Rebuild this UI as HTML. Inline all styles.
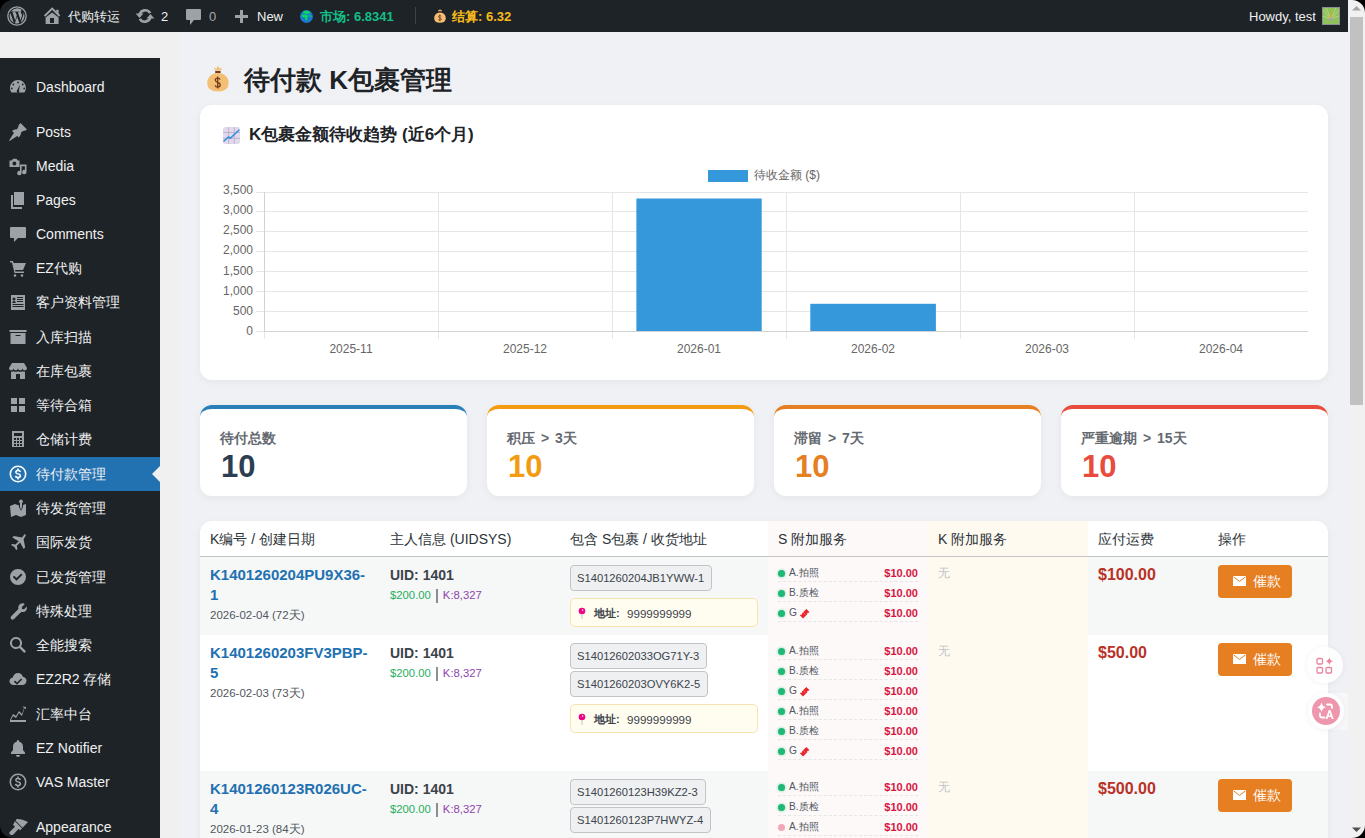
<!DOCTYPE html>
<html><head><meta charset="utf-8">
<style>
*{box-sizing:border-box;margin:0;padding:0}
html,body{width:1365px;height:838px;overflow:hidden}
body{background:#f0f0f1;font-family:"Liberation Sans",sans-serif;color:#3c434a;font-size:13px;position:relative}
.abs{position:absolute}
#adminbar{position:absolute;left:0;top:0;width:1348px;height:32px;background:#1d2327;color:#f0f0f1;font-size:13px;line-height:32px}
#adminbar .it{position:absolute;top:1px;height:32px;white-space:nowrap}
#sb{position:absolute;left:0;top:58px;width:160px;height:780px;background:#1d2327}
#sbtop{position:absolute;left:0;top:32px;width:180px;height:26px;background:#f0f0f0}
.mi{position:absolute;left:0;width:160px;height:34px;color:#f0f0f1;font-size:14px}
.mi .tx{position:absolute;left:36px;top:0;line-height:34px;white-space:nowrap}
.mi svg{position:absolute;left:8px;top:7px;width:20px;height:20px;fill:#9ca2a7}
.mi.act{background:#2271b1}
.mi.act svg{fill:#fff}
.mi.act:after{content:"";position:absolute;right:0;top:9px;border:8px solid transparent;border-right-color:#f0f0f1}
#scroll{position:absolute;left:1348px;top:0;width:17px;height:838px;background:#f1f1f1}
#thumb{position:absolute;left:2px;top:17px;width:13px;height:388px;background:#c1c1c1}
.corner{position:absolute;width:14px;height:14px;overflow:hidden}
.card{position:absolute;background:#fff;border-radius:12px;box-shadow:0 2px 8px rgba(0,0,0,0.05)}

#wrap{position:absolute;left:180px;top:32px;width:1168px;height:806px;background:#f0f1f5}
.h1{position:absolute;left:244px;top:61px;font-size:26px;font-weight:bold;color:#1d2327;line-height:38px;white-space:nowrap}
.ctitle{position:absolute;left:249px;top:124px;font-size:17px;font-weight:bold;color:#1d2327;line-height:22px;white-space:nowrap}
.stat{position:absolute;top:405px;width:267px;height:91px;background:#fff;border-radius:12px;border-top:4px solid;box-shadow:0 2px 8px rgba(0,0,0,0.05)}
.stat .lb{position:absolute;left:20px;top:19px;font-size:14px;word-spacing:2px;font-weight:bold;color:#646970;line-height:20px;white-space:nowrap}
.stat .vl{position:absolute;left:21px;top:40px;font-size:31px;font-weight:bold;line-height:36px}
#tbl{position:absolute;left:200px;top:521px;width:1128px;height:340px;background:#fff;border-radius:12px;overflow:hidden;box-shadow:0 2px 8px rgba(0,0,0,0.05)}
.th{position:absolute;top:1px;height:35px;line-height:35px;font-size:14px;color:#2c3338;white-space:nowrap;padding-left:10px}
.colS{position:absolute;left:568px;top:0;width:160px;height:340px;background:#fdf9f9}
.colK{position:absolute;left:728px;top:0;width:160px;height:340px;background:#fefaf0}
.row{position:absolute;left:0;width:1128px}
.klink{position:absolute;left:10px;top:8px;width:170px;font-size:15px;font-weight:bold;color:#2271b1;line-height:20px}
.kdate{position:absolute;left:10px;font-size:11.5px;color:#50575e;line-height:16px;white-space:nowrap}
.uid{position:absolute;left:190px;top:8px;font-size:14px;font-weight:bold;color:#3c434a;line-height:20px;white-space:nowrap}
.bal{position:absolute;left:190px;top:30px;font-size:11.3px;line-height:16px;white-space:nowrap}
.tag{position:absolute;left:370px;height:26px;line-height:24px;border:1px solid #c3c4c7;background:#eef0f2;border-radius:4px;padding:0 7px 0 6px;font-size:11.2px;color:#3c434a;white-space:nowrap}
.addr{position:absolute;left:370px;width:188px;height:29px;border:1px solid #f7e3b0;background:#fffcf0;border-radius:5px;font-size:12px;line-height:29px;white-space:nowrap;color:#3c434a}
.svc{position:absolute;left:578px;width:140px;height:20px;border-bottom:1px dashed #e6e6e6}
.svc .dot{position:absolute;left:0;top:8px;width:7px;height:7px;border-radius:50%;background:#1fb877;box-shadow:0 0 3px rgba(31,184,119,0.6)}
.svc .nm{position:absolute;left:11px;top:3px;font-size:10.2px;line-height:16px;color:#50575e;white-space:nowrap}
.svc .pr{position:absolute;right:0;top:3px;font-size:11px;font-weight:bold;line-height:16px;color:#d6153f}
.none{position:absolute;left:738px;top:8px;font-size:12px;color:#c3c4c7;line-height:18px}
.fee{position:absolute;left:898px;top:8px;font-size:16px;font-weight:bold;color:#b83227;line-height:20px}
.btn{position:absolute;left:1018px;top:8px;width:74px;height:33px;background:#e67e22;border-radius:4px;color:#fff;font-size:14px;line-height:33px;white-space:nowrap}
</style></head><body>
<div id="adminbar">
<svg class="abs" style="left:7px;top:6px" width="20" height="20" viewBox="0 0 20 20"><circle cx="10" cy="10" r="9.2" fill="none" stroke="#9ca2a7" stroke-width="1.3"/><path fill="#9ca2a7" d="M2.6 10c0 2.9 1.7 5.5 4.2 6.7L3.3 7A7.4 7.4 0 0 0 2.6 10zm12.4-.4c0-.9-.3-1.6-.6-2.1-.4-.6-.7-1.2-.7-1.8 0-.7.5-1.4 1.3-1.4h.1A7.4 7.4 0 0 0 3.9 5.7h.5c.8 0 2-.1 2-.1.4 0 .4.6 0 .6 0 0-.4.1-.9.1l2.7 8.1 1.6-4.9-1.2-3.2c-.4 0-.8-.1-.8-.1-.4 0-.4-.6 0-.6 0 0 1.2.1 2 .1.8 0 2-.1 2-.1.4 0 .4.6 0 .6 0 0-.4.1-.9.1l2.7 8 .7-2.5c.4-1 .6-1.7.6-2.3zM10.1 10.7l-2.2 6.5a7.4 7.4 0 0 0 4.6-.1l-.1-.1-2.3-6.3zm6.4-4.2c0 .3.1.5.1.8 0 .7-.1 1.6-.6 2.7l-2.2 6.5a7.4 7.4 0 0 0 2.7-10z"/></svg>
<svg class="abs" style="left:40px;top:4px" width="24" height="24" viewBox="0 0 24 24"><path d="M4.6 12L12.2 4.6 19.6 12" stroke="#9ca2a7" stroke-width="2" fill="none"/><rect x="16.2" y="5.8" width="2.4" height="4" fill="#9ca2a7"/><path fill-rule="evenodd" fill="#9ca2a7" d="M5.6 13.4L12.2 8.6 18.6 13.4V19.9H5.6zM10 14v4.9h4V14z"/></svg>
<div class="it" style="left:68px">代购转运</div>
<svg class="abs" style="left:135px;top:8px" width="20" height="16" viewBox="0 0 20 16"><path d="M15.2 5.2A5.8 5.8 0 0 0 4.6 6.6M4.8 10.8A5.8 5.8 0 0 0 15.4 9.4" stroke="#9ca2a7" stroke-width="2.6" fill="none"/><path d="M0.6 5.6H8.4L4.6 10z" fill="#9ca2a7"/><path d="M19.4 10.4H11.6L15.4 6z" fill="#9ca2a7"/></svg>
<div class="it" style="left:161px">2</div>
<svg class="abs" style="left:186px;top:9px" width="15" height="16" viewBox="0 0 15 16"><path fill="#9ca2a7" d="M1 0h13a1 1 0 0 1 1 1v9a1 1 0 0 1-1 1H8l-4 5v-5H1a1 1 0 0 1-1-1V1a1 1 0 0 1 1-1z"/></svg>
<div class="it" style="left:209px;color:#a7aaad">0</div>
<svg class="abs" style="left:235px;top:10px" width="13" height="13" viewBox="0 0 13 13"><path fill="#9ca2a7" d="M5 0h3v5h5v3H8v5H5V8H0V5h5z"/></svg>
<div class="it" style="left:257px">New</div>
<svg class="abs" style="left:300px;top:9.7px" width="13" height="13" viewBox="0 0 26 26"><circle cx="13" cy="13" r="13" fill="#1a78d0"/><path fill="#0bd65e" d="M8 2.2Q13 0.8 18 2.5L21 5.5Q19 8 16 7.2L13 8.5Q11 6.5 7 6.5Q5.5 5 6 4z"/><path fill="#0bd65e" d="M3.5 9.5Q8 8 12 9.5L16 10.5Q17.5 13.5 15 15.5L13.5 21.5Q12 22.5 11 19L9.5 15Q5.5 14.5 3 12.5z"/><path fill="#0bd65e" d="M18.5 9.5Q22 10 23.5 13L21 14.5Q19.5 12 18.5 11z"/></svg>
<div class="it" style="left:320px;color:#12bf86;font-weight:bold">市场: 6.8341</div>
<div class="abs" style="left:415px;top:7px;width:1px;height:17px;background:#3c434a"></div>
<svg class="abs" style="left:434px;top:9px" width="12" height="14.5" viewBox="0 0 22 27"><path fill="#f3bf74" d="M7 1.6Q8.5 2.8 9.3 2.6L11 0l1.7 2.6Q13.5 2.8 15 1.6L14.2 4.3H7.8z"/><rect x="8.2" y="4.9" width="5.4" height="2.3" fill="#7a3a1c"/><path fill="#f3bf74" d="M8 7.2h6Q21.7 9.8 21.7 17Q21.7 25.6 11 25.6Q0.2 25.6 0.2 17Q0.2 9.8 8 7.2z"/><path d="M13 13.6Q12.6 12.1 10.7 12.1Q8.3 12.1 8.3 14.1Q8.3 15.8 10.7 16.4Q13.2 17 13.2 19Q13.2 21 10.7 21Q8.5 21 8.1 19.3M10.7 10.6V22.5" stroke="#7a3a1c" stroke-width="1.6" fill="none"/></svg>
<div class="it" style="left:452px;color:#f9bc1c;font-weight:bold">结算: 6.32</div>
<div class="it" style="left:1249px">Howdy, test</div>
<svg class="abs" style="left:1322px;top:7px" width="18" height="18" viewBox="0 0 18 18"><rect x=".5" y=".5" width="17" height="17" fill="#8fc25a" stroke="#8c8f94"/><path d="M9 12L1 3M9 12L4 1M9 12L14 1M9 12L17 3M9 12L1 9M9 12L17 9" stroke="#b9dc8a" stroke-width="1" opacity=".8"/><path d="M8.6 2.5h.8v6h-.8z" fill="#d9a53a"/><path d="M7.6 8.3h2.8l.3 2.2H7.3z" fill="#e0a93a"/><path d="M7.3 10.5h3.4v3.2Q9 15 7.3 13.7z" fill="#a5a59a"/></svg>
</div>
<div id="sbtop"></div>
<div id="sb"></div>
<div class="mi" style="top:70.00px"><svg viewBox="0 0 20 20"><path d="M10 3a8 8 0 0 0-8 8c0 1.9.6 3.4 1.5 4.5h13A8 8 0 0 0 10 3zm0 1.6a.9.9 0 1 1 0 1.8.9.9 0 0 1 0-1.8zM5.3 6.6a.9.9 0 1 1 0 1.8.9.9 0 0 1 0-1.8zm9.4 0a.9.9 0 1 1 0 1.8.9.9 0 0 1 0-1.8zM3.8 10.5a.9.9 0 1 1 0 1.8.9.9 0 0 1 0-1.8zm12.4 0a.9.9 0 1 1 0 1.8.9.9 0 0 1 0-1.8zM12 7.5l-1 6a1.3 1.3 0 1 1-2 0z" fill-rule="evenodd"/></svg><span class="tx">Dashboard</span></div>
<div class="mi" style="top:115.00px"><svg viewBox="0 0 20 20"><path d="M12.5 1L19 7.4L17.3 8.6Q15 8.8 13 10.6L12.8 12.6L10.8 15.6L9.2 14L1.6 18.9L1.1 18.4L6 10.8L3.9 9L6.6 7.4L9 7.2Q10.6 5.6 10.6 3.2Z"/></svg><span class="tx">Posts</span></div>
<div class="mi" style="top:149.00px"><svg viewBox="0 0 20 20"><path fill-rule="evenodd" d="M1.5 4.5h2.3l1.2-1.8h3.5l1.2 1.8h1.8v6.5H1.5zM6.4 5.6a2 2 0 1 0 0 4 2 2 0 0 0 0-4z"/><path d="M12 8.5h6.5v7.6a2.2 2.2 0 1 1-1.6-2.1V10.3h-3.3v6.8a2.2 2.2 0 1 1-1.6-2.1z"/></svg><span class="tx">Media</span></div>
<div class="mi" style="top:183.00px"><svg viewBox="0 0 20 20"><path d="M6 2h10v13H6zM3 5h2v12h9v2H3z"/></svg><span class="tx">Pages</span></div>
<div class="mi" style="top:217.00px"><svg viewBox="0 0 20 20"><path d="M3 3h14a1 1 0 0 1 1 1v9a1 1 0 0 1-1 1h-7l-4 4v-4H3a1 1 0 0 1-1-1V4a1 1 0 0 1 1-1z"/></svg><span class="tx">Comments</span></div>
<div class="mi" style="top:251.00px"><svg viewBox="0 0 20 20"><path d="M2 3h3l.6 2H18l-3 7H7l.5 1.5H16V15H6.5L4 4.5H2zM7 16.2a1.3 1.3 0 1 1 0 2.6 1.3 1.3 0 0 1 0-2.6zm7 0a1.3 1.3 0 1 1 0 2.6 1.3 1.3 0 0 1 0-2.6z"/></svg><span class="tx">EZ代购</span></div>
<div class="mi" style="top:285.28px"><svg viewBox="0 0 20 20"><path d="M3 3h14v15H3zm3 2.5a1.5 1.5 0 1 0 0 3 1.5 1.5 0 0 0 0-3zM4.3 11h3.5c0-1.3-.8-2-1.8-2s-1.7.7-1.7 2zM9 5v1h6V5zm0 2v1h6V7zm0 2v1h6V9zM4.5 12v1h11v-1zm0 2v1h11v-1z" fill-rule="evenodd"/></svg><span class="tx">客户资料管理</span></div>
<div class="mi" style="top:319.56px"><svg viewBox="0 0 20 20"><path d="M1.5 3h17v2h-17zM2.5 6h15v11h-15zm5 2v1h5V8z" fill-rule="evenodd"/></svg><span class="tx">入库扫描</span></div>
<div class="mi" style="top:353.84px"><svg viewBox="0 0 20 20"><path d="M4 2h12l3 5c0 1.4-1 2.3-2.3 2.3S14.4 8.4 14.4 7c0 1.4-1 2.3-2.2 2.3S10 8.4 10 7c0 1.4-1 2.3-2.2 2.3S5.6 8.4 5.6 7c0 1.4-1 2.3-2.3 2.3S1 8.4 1 7zm-1 8.5c.9.3 1.9.2 2.6-.3.6.4 1.4.6 2.2.6s1.6-.2 2.2-.6c.6.4 1.4.6 2.2.6s1.6-.2 2.2-.6c.7.5 1.7.6 2.6.3V18h-5v-5h-4v5H3z"/></svg><span class="tx">在库包裹</span></div>
<div class="mi" style="top:388.12px"><svg viewBox="0 0 20 20"><path d="M3 3h6v6H3zm8 0h6v6h-6zM3 11h6v6H3zm8 0h6v6h-6z"/></svg><span class="tx">等待合箱</span></div>
<div class="mi" style="top:422.40px"><svg viewBox="0 0 20 20"><path d="M4 2h12v16H4zm2 2v3h8V4zm0 5v2h2V9zm3 0v2h2V9zm3 0v2h2V9zm-6 3v2h2v-2zm3 0v2h2v-2zm3 0v2h2v-2zm-6 3v2h2v-2zm3 0v2h2v-2zm3 0v2h2v-2z" fill-rule="evenodd"/></svg><span class="tx">仓储计费</span></div>
<div class="mi act" style="top:456.68px"><svg viewBox="0 0 20 20"><path d="M10 1.5a8.5 8.5 0 1 1 0 17 8.5 8.5 0 0 1 0-17zm0 1.6a6.9 6.9 0 1 0 0 13.8 6.9 6.9 0 0 0 0-13.8zM9.2 4.5h1.6v1.3c1 .2 1.9.8 2.2 1.9l-1.5.6c-.2-.7-.8-1-1.5-1-.8 0-1.3.4-1.3.9 0 .6.6.8 1.6 1.1 1.4.4 2.9 1 2.9 2.7 0 1.2-.9 2.1-2.4 2.3v1.2H9.2v-1.2c-1.2-.2-2.1-.9-2.4-2.1l1.5-.6c.2.8.9 1.2 1.8 1.2.9 0 1.4-.4 1.4-1 0-.6-.6-.9-1.7-1.2-1.3-.4-2.7-.9-2.7-2.6 0-1.1.8-1.9 2.1-2.2z" fill-rule="evenodd"/></svg><span class="tx">待付款管理</span></div>
<div class="mi" style="top:490.96px"><svg viewBox="0 0 20 20"><path d="M13 1.5a2 2 0 0 1 1 3.7V9l-1 3-1-3V5.2a2 2 0 0 1 1-3.7zM2 8l5-2 4 1.5V9l2 4 2-4V7l3-1v11l-5 2-5-2-5 2z"/></svg><span class="tx">待发货管理</span></div>
<div class="mi" style="top:525.24px"><svg viewBox="0 0 20 20"><path d="M16.5 2.2c.8-.3 1.6.5 1.3 1.3l-2.2 3.8 1.6 8.2-1.5 1.5-3.6-6.4-3.2 3.2.5 3.3-1.2 1.2-1.8-3.4-3.4-1.8 1.2-1.2 3.3.5 3.2-3.2L4.3 5.4 5.8 3.9 14 5.5z"/></svg><span class="tx">国际发货</span></div>
<div class="mi" style="top:559.52px"><svg viewBox="0 0 20 20"><path d="M10 2a8 8 0 1 1 0 16 8 8 0 0 1 0-16zm-1.5 11.8l6-6-1.4-1.4-4.6 4.6-2.3-2.3-1.4 1.4z" fill-rule="evenodd"/></svg><span class="tx">已发货管理</span></div>
<div class="mi" style="top:593.80px"><svg viewBox="0 0 20 20"><path d="M16.7 3.3l-2.8 2.8.1 2 2 .1 2.8-2.8c.5 2.2-.3 4.4-2.4 5.3-1 .5-2.2.5-3.2.2L6 18.1c-.8.8-2 .8-2.8 0s-.8-2 0-2.8l7.2-7.2c-.3-1-.3-2.2.2-3.2.9-2.1 3.1-2.9 5.3-2.4z"/></svg><span class="tx">特殊处理</span></div>
<div class="mi" style="top:628.08px"><svg viewBox="0 0 20 20"><path d="M8 2a6 6 0 0 1 5 9.3l5 5-1.7 1.7-5-5A6 6 0 1 1 8 2zm0 2a4 4 0 1 0 0 8 4 4 0 0 0 0-8z" fill-rule="evenodd"/></svg><span class="tx">全能搜索</span></div>
<div class="mi" style="top:662.36px"><svg viewBox="0 0 20 20"><path d="M10 4c2.4 0 4.3 1.6 4.8 3.8 2 .2 3.7 1.8 3.7 3.9 0 2.2-1.8 4.3-4 4.3h-9C3.2 16 1.5 14.3 1.5 12.3c0-1.9 1.4-3.4 3.2-3.7C5.3 6 7.4 4 10 4zm3 5.5l-4 4-2-2-1.2 1.2L9 15.8l5.2-5.2z" fill-rule="evenodd"/></svg><span class="tx">EZ2R2 存储</span></div>
<div class="mi" style="top:696.64px"><svg viewBox="0 0 20 20"><path d="M18 3v2.5L16.5 4 14 12l-3-3-3 5-3-2-2 4h15v2H2V16l3-6 3 2 3-5 3 3 2-6-1.5-1.5z"/></svg><span class="tx">汇率中台</span></div>
<div class="mi" style="top:730.92px"><svg viewBox="0 0 20 20"><path d="M10 2c.6 0 1 .4 1 1v.6c2.4.5 4 2.5 4 5v3.4l2 2.5V16H3v-1.5l2-2.5V8.6c0-2.5 1.6-4.5 4-5V3c0-.6.4-1 1-1zM8 17h4a2 2 0 0 1-4 0z"/></svg><span class="tx">EZ Notifier</span></div>
<div class="mi" style="top:764.92px"><svg viewBox="0 0 20 20"><path d="M10 1.5a8.5 8.5 0 1 1 0 17 8.5 8.5 0 0 1 0-17zm0 1.6a6.9 6.9 0 1 0 0 13.8 6.9 6.9 0 0 0 0-13.8zM9.2 4.5h1.6v1.3c1 .2 1.9.8 2.2 1.9l-1.5.6c-.2-.7-.8-1-1.5-1-.8 0-1.3.4-1.3.9 0 .6.6.8 1.6 1.1 1.4.4 2.9 1 2.9 2.7 0 1.2-.9 2.1-2.4 2.3v1.2H9.2v-1.2c-1.2-.2-2.1-.9-2.4-2.1l1.5-.6c.2.8.9 1.2 1.8 1.2.9 0 1.4-.4 1.4-1 0-.6-.6-.9-1.7-1.2-1.3-.4-2.7-.9-2.7-2.6 0-1.1.8-1.9 2.1-2.2z" fill-rule="evenodd"/></svg><span class="tx">VAS Master</span></div>
<div class="mi" style="top:809.92px"><svg viewBox="0 0 20 20"><path d="M8.3 2.2C11.5 1.8 15.5 3 20 5l-5.4 5.8-6.9-7z"/><path d="M7 4.2l7 7.1-1.6 1.9-2-1.2-5 5.4c-1 1-2.8.9-3.6-.1-.7-.9-.5-2.1.3-2.9l4.9-4.6-2-2z"/></svg><span class="tx">Appearance</span></div>

<div id="wrap"></div>
<svg class="abs" style="left:207px;top:66px" width="22" height="27" viewBox="0 0 22 27"><path fill="#f3bf74" d="M7 1.6Q8.5 2.8 9.3 2.6L11 0l1.7 2.6Q13.5 2.8 15 1.6L14.2 4.3H7.8z"/><rect x="8.2" y="4.9" width="5.4" height="2.3" fill="#7a3a1c"/><path fill="#f3bf74" d="M8 7.2h6Q21.7 9.8 21.7 17Q21.7 25.6 11 25.6Q0.2 25.6 0.2 17Q0.2 9.8 8 7.2z"/><path d="M13 13.6Q12.6 12.1 10.7 12.1Q8.3 12.1 8.3 14.1Q8.3 15.8 10.7 16.4Q13.2 17 13.2 19Q13.2 21 10.7 21Q8.5 21 8.1 19.3M10.7 10.6V22.5" stroke="#7a3a1c" stroke-width="1.3" fill="none"/></svg>
<div class="h1">待付款 K包裹管理</div>
<div class="card" style="left:200px;top:105px;width:1128px;height:275px"></div>
<svg class="abs" style="left:223px;top:127px" width="17" height="17" viewBox="0 0 17 17"><rect x="0" y="0" width="17" height="17" rx="2.5" fill="#e1d9ec"/><path d="M0 5.5h17M0 11.3h17M5.6 0v17M11.3 0v17" stroke="#b8a9c9" stroke-width=".8"/><path d="M0.5 14.5l5-4.5 1.8 1.2 9-8.5" stroke="#2f8fe0" stroke-width="1.5" fill="none"/></svg>
<div class="ctitle">K包裹金额待收趋势 (近6个月)</div>
<svg class="abs" style="left:0;top:0" width="1365" height="400" viewBox="0 0 1365 400" font-family="Liberation Sans" font-size="12" fill="#666">
<path d="M256 192.5H1308" stroke="#e6e6e6" stroke-width="1"/>
<text x="253" y="194.0" text-anchor="end">3,500</text>
<path d="M256 211.5H1308" stroke="#e6e6e6" stroke-width="1"/>
<text x="253" y="214.1" text-anchor="end">3,000</text>
<path d="M256 231.5H1308" stroke="#e6e6e6" stroke-width="1"/>
<text x="253" y="234.3" text-anchor="end">2,500</text>
<path d="M256 251.5H1308" stroke="#e6e6e6" stroke-width="1"/>
<text x="253" y="254.4" text-anchor="end">2,000</text>
<path d="M256 271.5H1308" stroke="#e6e6e6" stroke-width="1"/>
<text x="253" y="274.6" text-anchor="end">1,500</text>
<path d="M256 291.5H1308" stroke="#e6e6e6" stroke-width="1"/>
<text x="253" y="294.7" text-anchor="end">1,000</text>
<path d="M256 311.5H1308" stroke="#e6e6e6" stroke-width="1"/>
<text x="253" y="314.8" text-anchor="end">500</text>
<path d="M256 331.5H1308" stroke="#e6e6e6" stroke-width="1"/>
<text x="253" y="335.0" text-anchor="end">0</text>
<path d="M264.5 192V339" stroke="#e6e6e6" stroke-width="1"/>
<path d="M438.5 192V339" stroke="#e6e6e6" stroke-width="1"/>
<path d="M612.5 192V339" stroke="#e6e6e6" stroke-width="1"/>
<path d="M786.5 192V339" stroke="#e6e6e6" stroke-width="1"/>
<path d="M960.5 192V339" stroke="#e6e6e6" stroke-width="1"/>
<path d="M1134.5 192V339" stroke="#e6e6e6" stroke-width="1"/>
<path d="M264.5 192V331.5H1308" stroke="#d2d2d2" stroke-width="1" fill="none"/>
<text x="351" y="353" text-anchor="middle">2025-11</text>
<text x="525" y="353" text-anchor="middle">2025-12</text>
<text x="699" y="353" text-anchor="middle">2026-01</text>
<text x="873" y="353" text-anchor="middle">2026-02</text>
<text x="1047" y="353" text-anchor="middle">2026-03</text>
<text x="1221" y="353" text-anchor="middle">2026-04</text>
<rect x="636.4" y="198.5" width="125.3" height="132.5" fill="#3498db"/>
<rect x="810.3" y="303.8" width="125.6" height="27.2" fill="#3498db"/>
<rect x="708" y="170" width="40" height="12" fill="#3498db"/>
<text x="754" y="179">待收金额 ($)</text>
</svg>
<div class="stat" style="left:200px;border-top-color:#2980b9"><div class="lb">待付总数</div><div class="vl" style="color:#2c3e50">10</div></div>
<div class="stat" style="left:487px;border-top-color:#f39c12"><div class="lb">积压 &gt; 3天</div><div class="vl" style="color:#f39c12">10</div></div>
<div class="stat" style="left:774px;border-top-color:#e67e22"><div class="lb">滞留 &gt; 7天</div><div class="vl" style="color:#e67e22">10</div></div>
<div class="stat" style="left:1061px;border-top-color:#e74c3c"><div class="lb">严重逾期 &gt; 15天</div><div class="vl" style="color:#e74c3c">10</div></div>
<div id="tbl">
<div class="colS"></div><div class="colK"></div>
<div class="th" style="left:0px">K编号 / 创建日期</div>
<div class="th" style="left:180px">主人信息 (UIDSYS)</div>
<div class="th" style="left:360px">包含 S包裹 / 收货地址</div>
<div class="th" style="left:568px">S 附加服务</div>
<div class="th" style="left:728px">K 附加服务</div>
<div class="th" style="left:888px">应付运费</div>
<div class="th" style="left:1008px">操作</div>
<div class="abs" style="left:0;top:35px;width:1128px;height:1px;background:#c3c4c7"></div>
<div class="row" style="top:36px;height:78px;background:#f6f7f7"></div>
<div class="row" style="top:114px;height:136px;background:#fff"></div>
<div class="row" style="top:250px;height:90px;background:#f6f7f7"></div>
<div class="colS" style="top:36px;height:305px"></div><div class="colK" style="top:36px;height:305px"></div>
<div class="klink" style="top:44px">K1401260204PU9X36-<br>1</div>
<div class="kdate" style="top:86px">2026-02-04 (72天)</div>
<div class="uid" style="top:44px">UID: 1401</div>
<div class="bal" style="top:66px"><span style="color:#27ae60">$200.00</span><span style="display:inline-block;width:2px;height:14px;background:#50575e;vertical-align:-4px;margin:0 5px 0 5px;transform:scaleX(.65)"></span><span style="color:#8e44ad">K:8,327</span></div>
<div class="tag" style="top:44px">S1401260204JB1YWW-1</div>
<div class="addr" style="top:77px"><svg width="8" height="14" viewBox="0 0 8 14" style="position:absolute;left:7.3px;top:7.5px"><circle cx="4" cy="4" r="3.3" fill="#f0047f"/><circle cx="4.6" cy="3" r=".8" fill="#fff"/><path d="M4 7.2v4.8" stroke="#bbb" stroke-width=".8"/></svg><span style="position:absolute;left:23px;font-weight:bold;font-size:11px">地址:</span><span style="position:absolute;left:56px;font-size:11.6px">9999999999</span></div>
<div class="svc" style="top:41px"><span class="dot"></span><span class="nm">A.拍照</span><span class="pr">$10.00</span></div>
<div class="svc" style="top:61px"><span class="dot"></span><span class="nm">B.质检</span><span class="pr">$10.00</span></div>
<div class="svc" style="top:81px"><span class="dot"></span><span class="nm">G<svg width="11" height="11" viewBox="0 0 12 12" style="position:absolute;left:10px;top:2.5px"><path fill="#e8262b" d="M8 1l3.4 3.4-.9.9a1 1 0 0 0-1.4 1.4L4.4 11.4 1 8l.9-.9a1 1 0 0 0 1.4-1.4z"/><path d="M4.6 4.8l2.8 2.8" stroke="#fff" stroke-width=".7" stroke-dasharray="1 .9"/></svg></span><span class="pr">$10.00</span></div>
<div class="none" style="top:43px">无</div>
<div class="fee" style="top:44px">$100.00</div>
<div class="btn" style="top:44px"><svg width="13" height="10" viewBox="0 0 13 10" style="position:absolute;left:15px;top:11px"><rect x=".5" y=".5" width="12" height="9" fill="#fff" stroke="#fff"/><path d="M.5 .8l6 4.6 6-4.6" stroke="#e67e22" fill="none" stroke-width="1"/></svg><span style="position:absolute;left:35px">催款</span></div>
<div class="klink" style="top:122px">K1401260203FV3PBP-<br>5</div>
<div class="kdate" style="top:164px">2026-02-03 (73天)</div>
<div class="uid" style="top:122px">UID: 1401</div>
<div class="bal" style="top:144px"><span style="color:#27ae60">$200.00</span><span style="display:inline-block;width:2px;height:14px;background:#50575e;vertical-align:-4px;margin:0 5px 0 5px;transform:scaleX(.65)"></span><span style="color:#8e44ad">K:8,327</span></div>
<div class="tag" style="top:122px">S14012602033OG71Y-3</div>
<div class="tag" style="top:150px">S1401260203OVY6K2-5</div>
<div class="addr" style="top:183px"><svg width="8" height="14" viewBox="0 0 8 14" style="position:absolute;left:7.3px;top:7.5px"><circle cx="4" cy="4" r="3.3" fill="#f0047f"/><circle cx="4.6" cy="3" r=".8" fill="#fff"/><path d="M4 7.2v4.8" stroke="#bbb" stroke-width=".8"/></svg><span style="position:absolute;left:23px;font-weight:bold;font-size:11px">地址:</span><span style="position:absolute;left:56px;font-size:11.6px">9999999999</span></div>
<div class="svc" style="top:119px"><span class="dot"></span><span class="nm">A.拍照</span><span class="pr">$10.00</span></div>
<div class="svc" style="top:139px"><span class="dot"></span><span class="nm">B.质检</span><span class="pr">$10.00</span></div>
<div class="svc" style="top:159px"><span class="dot"></span><span class="nm">G<svg width="11" height="11" viewBox="0 0 12 12" style="position:absolute;left:10px;top:2.5px"><path fill="#e8262b" d="M8 1l3.4 3.4-.9.9a1 1 0 0 0-1.4 1.4L4.4 11.4 1 8l.9-.9a1 1 0 0 0 1.4-1.4z"/><path d="M4.6 4.8l2.8 2.8" stroke="#fff" stroke-width=".7" stroke-dasharray="1 .9"/></svg></span><span class="pr">$10.00</span></div>
<div class="svc" style="top:179px"><span class="dot"></span><span class="nm">A.拍照</span><span class="pr">$10.00</span></div>
<div class="svc" style="top:199px"><span class="dot"></span><span class="nm">B.质检</span><span class="pr">$10.00</span></div>
<div class="svc" style="top:219px"><span class="dot"></span><span class="nm">G<svg width="11" height="11" viewBox="0 0 12 12" style="position:absolute;left:10px;top:2.5px"><path fill="#e8262b" d="M8 1l3.4 3.4-.9.9a1 1 0 0 0-1.4 1.4L4.4 11.4 1 8l.9-.9a1 1 0 0 0 1.4-1.4z"/><path d="M4.6 4.8l2.8 2.8" stroke="#fff" stroke-width=".7" stroke-dasharray="1 .9"/></svg></span><span class="pr">$10.00</span></div>
<div class="none" style="top:121px">无</div>
<div class="fee" style="top:122px">$50.00</div>
<div class="btn" style="top:122px"><svg width="13" height="10" viewBox="0 0 13 10" style="position:absolute;left:15px;top:11px"><rect x=".5" y=".5" width="12" height="9" fill="#fff" stroke="#fff"/><path d="M.5 .8l6 4.6 6-4.6" stroke="#e67e22" fill="none" stroke-width="1"/></svg><span style="position:absolute;left:35px">催款</span></div>
<div class="klink" style="top:258px">K1401260123R026UC-<br>4</div>
<div class="kdate" style="top:300px">2026-01-23 (84天)</div>
<div class="uid" style="top:258px">UID: 1401</div>
<div class="bal" style="top:280px"><span style="color:#27ae60">$200.00</span><span style="display:inline-block;width:2px;height:14px;background:#50575e;vertical-align:-4px;margin:0 5px 0 5px;transform:scaleX(.65)"></span><span style="color:#8e44ad">K:8,327</span></div>
<div class="tag" style="top:258px">S1401260123H39KZ2-3</div>
<div class="tag" style="top:286px">S1401260123P7HWYZ-4</div>
<div class="svc" style="top:255px"><span class="dot"></span><span class="nm">A.拍照</span><span class="pr">$10.00</span></div>
<div class="svc" style="top:275px"><span class="dot"></span><span class="nm">B.质检</span><span class="pr">$10.00</span></div>
<div class="svc" style="top:295px"><span class="dot" style="background:#f4a6b8;box-shadow:none"></span><span class="nm">A.拍照</span><span class="pr">$10.00</span></div>
<div class="none" style="top:257px">无</div>
<div class="fee" style="top:258px">$500.00</div>
<div class="btn" style="top:258px"><svg width="13" height="10" viewBox="0 0 13 10" style="position:absolute;left:15px;top:11px"><rect x=".5" y=".5" width="12" height="9" fill="#fff" stroke="#fff"/><path d="M.5 .8l6 4.6 6-4.6" stroke="#e67e22" fill="none" stroke-width="1"/></svg><span style="position:absolute;left:35px">催款</span></div>
</div>
<div id="scroll"><div id="thumb"></div><svg class="abs" style="left:4px;top:5px" width="9" height="6"><path d="M0 5.5L4.5 1 9 5.5z" fill="#a3a3a3"/></svg><svg class="abs" style="left:4px;top:827px" width="9" height="6"><path d="M0 .5L4.5 5 9 .5z" fill="#505050"/></svg></div>

<div class="abs" style="left:1307px;top:647px;width:36px;height:36px;border-radius:50%;background:rgba(255,255,255,0.85);box-shadow:0 1px 6px rgba(0,0,0,0.06)"></div>
<svg class="abs" style="left:1316px;top:657px" width="18" height="18" viewBox="0 0 18 18" fill="none" stroke="#e8849f" stroke-width="1.3"><rect x="1" y="1.5" width="5.5" height="5.5" rx="1.2"/><rect x="1" y="10.5" width="5.5" height="5.5" rx="1.2"/><rect x="10" y="10.5" width="5.5" height="5.5" rx="1.2"/><path d="M13.3 0.3Q13.8 3.5 17 4.2Q13.8 4.9 13.3 8.1Q12.8 4.9 9.6 4.2Q12.8 3.5 13.3 0.3z" fill="#e8849f" stroke="none"/></svg>
<div class="abs" style="left:1328px;top:693px;width:20px;height:37px;background:rgba(255,255,255,0.45)"></div><div class="abs" style="left:1308px;top:693px;width:36px;height:36px;border-radius:50%;background:rgba(255,255,255,0.85);box-shadow:0 1px 6px rgba(0,0,0,0.06)"></div>
<svg class="abs" style="left:1312px;top:697px" width="28" height="28" viewBox="0 0 28 28"><circle cx="14" cy="14" r="14" fill="#ee96ad"/><path d="M9.5 5.5Q10.3 9.6 14.3 10.3Q10.3 11 9.5 15.1Q8.7 11 4.7 10.3Q8.7 9.6 9.5 5.5z" fill="#fff"/><path d="M15 7.5h3a2 2 0 0 1 2 2v1.5M8 16.5v2a2 2 0 0 0 2 2h2.5" stroke="#fff" stroke-width="1.8" fill="none" stroke-linecap="round"/><path d="M13.5 22l3.3-9h1.6l3.3 9h-1.9l-.7-2h-3l-.7 2zm3.1-3.6h2l-1-3z" fill="#fff"/></svg>
<svg class="abs" style="left:0;top:0" width="14" height="14"><path d="M0 0h13A13 13 0 0 0 0 13z" fill="#000"/></svg>
<svg class="abs" style="left:1351px;top:0" width="14" height="14"><path d="M14 0H1A13 13 0 0 1 14 13z" fill="#000"/></svg>
<svg class="abs" style="left:0;top:824px" width="14" height="14"><path d="M0 14h13A13 13 0 0 1 0 1z" fill="#000"/></svg>
<svg class="abs" style="left:1351px;top:824px" width="14" height="14"><path d="M14 14H1A13 13 0 0 0 14 1z" fill="#000"/></svg>
</body></html>
